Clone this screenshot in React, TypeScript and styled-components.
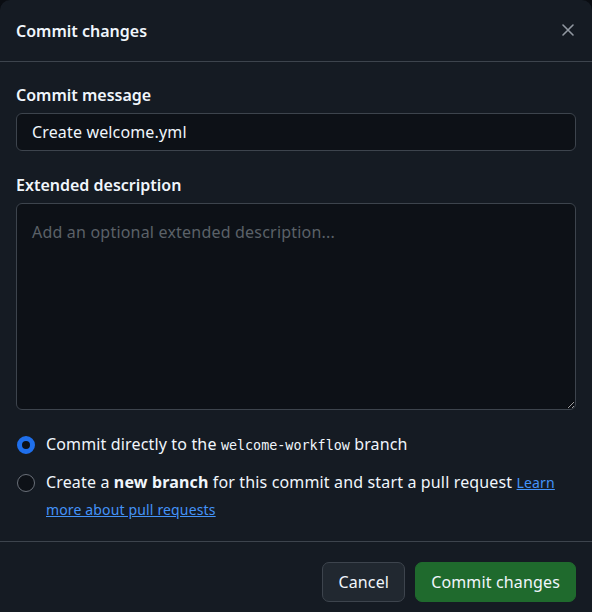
import React from "react";
import styled, { createGlobalStyle } from "styled-components";

const Global = createGlobalStyle`
  html, body {
    margin: 0;
    padding: 0;
    background: #0a0d12;
    overflow: hidden;
  }
  * { box-sizing: border-box; }
`;

const Dialog = styled.div`
  width: 592px;
  height: 612px;
  background: #151b23;
  border-radius: 10px 10px 0 0;
  color: #f0f6fc;
  font-family: "Noto Sans", "Open Sans", sans-serif;
  font-size: 16px;
  display: flex;
  flex-direction: column;
  overflow: hidden;
`;

const Header = styled.div`
  flex: none;
  height: 62px;
  display: flex;
  align-items: center;
  justify-content: space-between;
  padding: 0 16px;
  border-bottom: 1px solid #3d444d;
`;

const Title = styled.h1`
  margin: 0;
  font-size: 16px;
  font-weight: 600;
  line-height: 24px;
`;

const CloseButton = styled.button`
  width: 32px;
  height: 32px;
  margin-right: -8px;
  margin-top: -2px;
  border: none;
  background: transparent;
  display: flex;
  align-items: center;
  justify-content: center;
  padding: 0;
  cursor: pointer;
`;

const Body = styled.div`
  flex: none;
  padding: 21px 16px 0;
  display: flex;
  flex-direction: column;
`;

const Group = styled.div<{ $mb: number }>`
  display: flex;
  flex-direction: column;
  gap: 6px;
  margin-bottom: ${(p) => p.$mb}px;
`;

const Label = styled.label`
  font-size: 16px;
  font-weight: 600;
  line-height: 24px;
`;

const Input = styled.input`
  height: 38px;
  width: 100%;
  background: #0d1117;
  border: 1px solid #3d444d;
  border-radius: 6px;
  color: #f0f6fc;
  font-family: inherit;
  font-size: 16px;
  letter-spacing: 0.15px;
  padding: 0 15px;
  outline: none;
`;

const TextArea = styled.textarea`
  height: 207px;
  width: 100%;
  background: #0d1117;
  border: 1px solid #3d444d;
  border-radius: 6px;
  color: #f0f6fc;
  font-family: inherit;
  font-size: 16px;
  letter-spacing: 0.2px;
  line-height: 24px;
  padding: 16px 15px;
  outline: none;
  resize: vertical;
  &::placeholder {
    color: #5b6168;
  }
`;

const Options = styled.div`
  display: flex;
  flex-direction: column;
  gap: 10px;
  padding-top: 21px;
  padding-bottom: 18px;
`;

const Option = styled.label`
  display: flex;
  align-items: flex-start;
  gap: 11px;
  line-height: 27px;
  font-size: 16px;
  letter-spacing: 0.15px;
`;

const Radio = styled.span<{ $checked?: boolean }>`
  flex: none;
  width: 18px;
  height: 18px;
  margin-left: 1px;
  margin-top: 4.5px;
  border-radius: 50%;
  background: #0d1117;
  border: ${(p) => (p.$checked ? "5px solid #1f6feb" : "1px solid #6a7079")};
`;

const Code = styled.code`
  font-family: "DejaVu Sans Mono", "Liberation Mono", monospace;
  font-size: 13.4px;
  letter-spacing: 0;
`;

const Strong = styled.strong`
  font-weight: 700;
`;

const Link = styled.a`
  color: #4493f8;
  font-size: 14px;
  text-decoration: underline;
`;

const Footer = styled.div`
  flex: none;
  border-top: 1px solid #3d444d;
  padding: 20px 16px;
  display: flex;
  justify-content: flex-end;
  gap: 10px;
`;

const Button = styled.button<{ $primary?: boolean }>`
  height: 40px;
  padding: 0 15px;
  border-radius: 7px;
  font-family: inherit;
  font-size: 16px;
  letter-spacing: 0.15px;
  color: #f0f6fc;
  background: ${(p) => (p.$primary ? "#1f6a2d" : "#212830")};
  border: 1px solid ${(p) => (p.$primary ? "#1f6a2d" : "#3d444d")};
  cursor: pointer;
`;

export default function App() {
  return (
    <>
      <Global />
      <Dialog>
        <Header>
          <Title>Commit changes</Title>
          <CloseButton aria-label="Close">
            <svg width="16" height="16" viewBox="0 0 16 16">
              <path
                d="M3 3 L13 13 M13 3 L3 13"
                stroke="#9198a1"
                strokeWidth="1.6"
                strokeLinecap="round"
              />
            </svg>
          </CloseButton>
        </Header>
        <Body>
          <Group $mb={22}>
            <Label>Commit message</Label>
            <Input defaultValue="Create welcome.yml" />
          </Group>
          <Group $mb={0}>
            <Label>Extended description</Label>
            <TextArea placeholder="Add an optional extended description..." />
          </Group>
          <Options>
            <Option>
              <Radio $checked />
              <span>
                Commit directly to the <Code>welcome-workflow</Code> branch
              </span>
            </Option>
            <Option>
              <Radio />
              <span>
                Create a <Strong>new branch</Strong> for this commit and start a
                pull request <Link href="#">Learn more about pull requests</Link>
              </span>
            </Option>
          </Options>
        </Body>
        <Footer>
          <Button>Cancel</Button>
          <Button $primary>Commit changes</Button>
        </Footer>
      </Dialog>
    </>
  );
}
